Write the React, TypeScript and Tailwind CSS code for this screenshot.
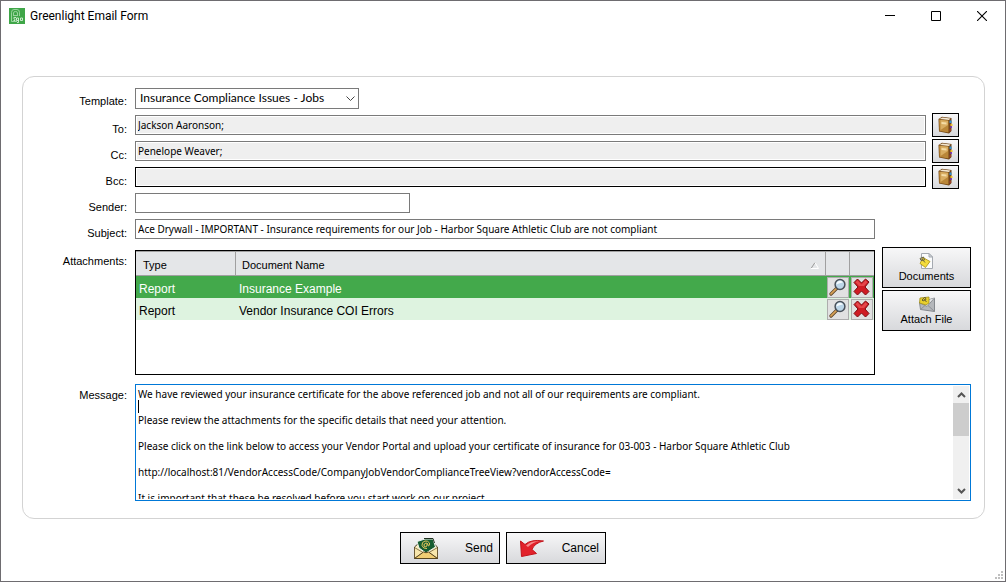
import React from 'react';

const message = `We have reviewed your insurance certificate for the above referenced job and not all of our requirements are compliant.

Please review the attachments for the specific details that need your attention.

Please click on the link below to access your Vendor Portal and upload your certificate of insurance for 03-003 - Harbor Square Athletic Club

http://localhost:81/VendorAccessCode/CompanyJobVendorComplianceTreeView?vendorAccessCode=

It is important that these be resolved before you start work on our project.`;

const recipients = [
  { id: 'to', label: 'To:', value: 'Jackson Aaronson;', border: 'border-[#7a7a7a]' },
  { id: 'cc', label: 'Cc:', value: 'Penelope Weaver;', border: 'border-[#7a7a7a]' },
  { id: 'bcc', label: 'Bcc:', value: '', border: 'border-black' },
];

const attachments = [
  { type: 'Report', name: 'Insurance Example', row: 'bg-[#43a94b] text-white' },
  { type: 'Report', name: 'Vendor Insurance COI Errors', row: 'bg-[#def3e0] text-black' },
];

const raised = 'border border-black bg-linear-to-b from-[#f7f7f8] to-[#d8d9dc]';

const AppIcon = () => (
  <svg viewBox="0 0 16 16" className="size-4" aria-hidden="true">
    <rect width="16" height="16" fill="#3fa648" />
    <path d="M2.500 13.500V4.500Q2.500 1.500 5 1.500H8Q10.500 1.500 10.500 4.500V8M4.500 7V5Q4.500 3.500 6.500 3.500Q8.500 3.500 8.500 5V7M2.500 13.500H8M4 7.500H9" fill="none" stroke="#a3d9a7" strokeWidth=".9" />
    <path d="M7 9.500Q4.500 9 4.500 10.200Q6.500 11 6 12.500H4.500M9.500 10H7.500V12.500H9.500M9.500 10V14.500H8M11.500 10H13.500V12.500H11.500Z" fill="none" stroke="#d8f1da" strokeWidth=".9" />
  </svg>
);

const BookIcon = () => (
  <svg viewBox="0 0 16 18" className="h-[18px] w-4" aria-hidden="true">
    <path d="M.5 3L4 .8L13.500 2V15L11 17.500L1 15.500Z" fill="#6f4213" />
    <path d="M1.500 3L4.500 1.500L12.500 2.500L11 4Z" fill="#f3e7d0" />
    <path d="M1 3.500L10.500 4.500V16.500L1.500 15Z" fill="#b98638" />
    <path d="M2.500 4L10 4.700V9L2.500 14Z" fill="#d8ad62" />
    <path d="M3.500 6L8.500 6.500V8.500L3.500 8Z" fill="#f4dda6" />
    <path d="M11 4.500L13 3V15L11 16.500Z" fill="#74451f" />
    <rect x="11.500" y="4.500" width="2" height="2.500" fill="#2e8fd0" />
    <rect x="12.500" y="8" width="2" height="2" fill="#f0c52a" />
    <rect x="12.500" y="10" width="1.500" height="2" fill="#7f39c9" />
    <rect x="11.500" y="13" width="1.500" height="2" fill="#a33a2a" />
  </svg>
);

const DocumentIcon = () => (
  <svg viewBox="0 0 16 16" className="size-4" aria-hidden="true">
    <path d="M2.500 .5H10L13.500 4V15.500H2.500Z" fill="#fafbfc" stroke="#a4a9b0" />
    <path d="M10 .5V4H13.500Z" fill="#d5d9de" stroke="#a4a9b0" />
    <path d="M4 4.500L11 8.500L6.500 14.500L1 10.500Z" fill="#f4dc3c" stroke="#a78d12" strokeWidth=".8" />
    <path d="M1 5.500L4.500 4L5.500 7L2 7.500ZM3 6L6 9.500" fill="none" stroke="#6b6640" />
  </svg>
);

const AttachIcon = () => (
  <svg viewBox="0 0 18 16" className="h-4 w-[18px]" aria-hidden="true">
    <path d="M1.500 6.500L16.500 2V15.500L2.500 13.500Z" fill="#b4b7bb" stroke="#85898e" />
    <path d="M2 7L9 10.500L16.500 2" fill="#e4e6e8" stroke="#8d9196" />
    <path d="M2.500 13.500L7 9.500M16.500 15.500L10 9.500" stroke="#8d9196" />
    <path d="M2 2L11 1V7L8 9L1.500 7Z" fill="#e8cf2c" stroke="#a18d1b" strokeWidth=".8" />
    <path d="M4 4L7 1L8 3.500L5 5ZM6 3L8.500 6" fill="none" stroke="#6a6230" />
  </svg>
);

const MagnifierIcon = () => (
  <svg viewBox="0 0 18 18" className="size-[18px]" aria-hidden="true">
    <path d="M2 16L8 10" stroke="#5b4226" strokeWidth="3.200" strokeLinecap="round" />
    <path d="M2 15.800L7.500 10.300" stroke="#d6a055" strokeWidth="1.800" strokeLinecap="round" />
    <circle cx="11" cy="6.500" r="4.900" fill="#bcd6e8" stroke="#49515a" strokeWidth="1.500" />
    <path d="M7.500 6.500A3.500 3.500 0 0 1 14 4.500Q10.500 5 7.500 6.500Z" fill="#f4fafd" />
  </svg>
);

const DeleteIcon = () => (
  <svg viewBox="0 0 18 18" className="size-[18px]" aria-hidden="true">
    <path d="M4.500 1L8.500 5L12.500 1L16 4L12 9L16 13.500L12.500 17L8.500 13L4.500 17L1 13.500L5 9L1 4.500Z" fill="#cf1c24" stroke="#7d0b10" strokeLinejoin="round" />
    <path d="M4.500 2.300L8.500 6.500L12.500 2.300L14.500 4.200L11 8H6L2.500 4.300Z" fill="#ee5a5c" opacity=".7" />
  </svg>
);

const SendIcon = () => (
  <svg viewBox="0 0 26 24" className="h-6 w-[26px]" aria-hidden="true">
    <path d="M1.500 11L7 6H19L24.500 11V22.500H1.500Z" fill="#fbeec0" stroke="#3f3521" />
    <path d="M4 5.500L12 3L20 3L22.500 11L13 17L6 12Z" fill="#165c31" stroke="#eef3ee" />
    <path d="M11 2.500L20 2.500L21.500 7" fill="none" stroke="#20301f" />
    <path d="M15 9Q15 7 13 7Q10.500 7.500 11 10Q12 11.500 14 10V7.500M15 10Q17 10 16.500 7Q15 4.500 12 5Q8.500 6 9 9.500Q10 13 14 12.500" fill="none" stroke="#e6c75c" strokeWidth="1" />
    <path d="M1.500 11.500L10 16.500L1.500 22.500ZM24.500 11.500L16 16.500L24.500 22.500Z" fill="#f8e6ac" stroke="#57451f" strokeWidth=".7" />
    <path d="M1.500 22.500L10.500 16Q13 17.500 15.500 16L24.500 22.500Z" fill="#f0cd74" stroke="#57451f" />
  </svg>
);

const CancelIcon = () => (
  <svg viewBox="0 0 26 20" className="h-5 w-[26px]" aria-hidden="true">
    <path d="M1.500 3L6 6.500Q12 1 24.500 3Q15.500 5 13 11.500L17.500 15.500L2.500 18.500Z" fill="#e2222b" stroke="#c3131b" strokeLinejoin="round" />
    <path d="M7 7.500Q12 2.500 21 3.300Q14 4 9 9Z" fill="#f58a8b" />
  </svg>
);

const fieldLabel = 'w-[104px] shrink-0 self-end text-right leading-[18px]';
const textField = "h-5 border px-[2px] pb-px font-['Noto_Sans',sans-serif] text-[10px]";
const headCell = 'border-y border-[#a0a0a0] pt-[3px] font-normal';
const cellButton = 'ml-px flex h-[21px] w-[22px] items-center justify-center border border-[#adadad] bg-[#e1e1e1]';

const App: React.FC = () => {
  return (
    <main className="flex min-h-screen flex-col border border-[#6e6c70] bg-white font-['Liberation_Sans',sans-serif] text-[11px] text-black">
      <header className="flex h-[30px] items-center">
        <div className="flex flex-1 items-center gap-[5px] pl-2 font-['Roboto',sans-serif] text-xs">
          <AppIcon />
          <h1>Greenlight Email Form</h1>
        </div>
        <button type="button" aria-label="Minimize" className="flex h-full w-[46px] items-center justify-center">
          <svg viewBox="0 0 10 10" className="size-[10px]"><path d="M0 4.500H10" stroke="#000" /></svg>
        </button>
        <button type="button" aria-label="Maximize" className="flex h-full w-[46px] items-center justify-center">
          <svg viewBox="0 0 10 10" className="size-[10px]"><path d="M.5 .5H9.500V9.500H.5Z" fill="none" stroke="#000" /></svg>
        </button>
        <button type="button" aria-label="Close" className="flex h-full w-[46px] items-center justify-center">
          <svg viewBox="0 0 10 10" className="size-[10px]"><path d="M0 0L10 10M10 0L0 10" stroke="#000" strokeWidth="1.100" /></svg>
        </button>
      </header>

      <form className="flex flex-1 flex-col">
        <section className="mt-[45px] mr-5 ml-[21px] rounded-xl border border-[#d3d3d3] pt-[11px] pr-[13px] pb-[17px]">
          {/* Template */}
          <div className="mb-[2px] flex h-[22px] items-start gap-2">
            <label htmlFor="template" className={fieldLabel}>Template:</label>
            <div className="relative w-56">
              <select id="template" className="block h-[21px] w-full appearance-none border border-[#7a7a7a] bg-white pb-px pl-1 font-['Lato',sans-serif] text-xs">
                <option>Insurance Compliance Issues - Jobs</option>
              </select>
              <svg viewBox="0 0 9 6" className="pointer-events-none absolute top-2 right-1 h-[6px] w-[9px]">
                <path d="M.5 .5L4.500 4.500L8.500 .5" fill="none" stroke="#444" />
              </svg>
            </div>
          </div>

          {/* Recipients */}
          {recipients.map((field) => (
            <div key={field.id} className="flex h-[26px] items-center gap-2 pr-3">
              <label htmlFor={field.id} className={fieldLabel}>{field.label}</label>
              <div className="flex flex-1 items-center gap-[6px]">
                <input id={field.id} readOnly defaultValue={field.value} className={`min-w-0 flex-1 bg-[#efefef] shadow-[inset_0_0_0_1px_#fff] ${textField} ${field.border}`} />
                <button type="button" aria-label={`Address book ${field.label}`} className={`flex h-6 w-[27px] items-center justify-center ${raised}`}>
                  <BookIcon />
                </button>
              </div>
            </div>
          ))}

          <div className="flex h-[26px] items-center gap-2">
            <label htmlFor="sender" className={fieldLabel}>Sender:</label>
            <input id="sender" className={`w-[275px] border-[#7a7a7a] ${textField}`} />
          </div>
          <div className="flex h-[26px] items-center gap-2 pr-24">
            <label htmlFor="subject" className={fieldLabel}>Subject:</label>
            <input id="subject" defaultValue="Ace Drywall - IMPORTANT - Insurance requirements for our Job - Harbor Square Athletic Club are not compliant" className={`min-w-0 flex-1 border-[#7a7a7a] ${textField}`} />
          </div>

          {/* Attachments */}
          <div className="mt-[5px] flex gap-2">
            <span id="attachments" className="w-[104px] shrink-0 pt-[5px] text-right leading-[18px]">Attachments:</span>
            <div className="flex flex-1 gap-[7px]">
              <div className="mt-[3px] h-[125px] flex-1 border border-black">
                <table aria-labelledby="attachments" className="w-full table-fixed border-separate border-spacing-0 text-left text-xs">
                  <colgroup>
                    <col className="w-[100px]" />
                    <col />
                    <col className="w-6" />
                    <col className="w-6" />
                  </colgroup>
                  <thead>
                    <tr className="h-[25px] bg-[#e4e6e8] text-[11px]">
                      <th className={`border-r pl-[7px] ${headCell}`}>Type</th>
                      <th className={`border-r px-[6px] ${headCell}`}>
                        <div className="flex items-center justify-between">
                          Document Name
                          <svg viewBox="0 0 8 7" className="h-[7px] w-2"><path d="M0 6.500L4 .5" stroke="#999" /><path d="M4 .5L7.500 6.500H0" fill="none" stroke="#fff" /></svg>
                        </div>
                      </th>
                      <th className={`border-r ${headCell}`} aria-label="View" />
                      <th className={headCell} aria-label="Delete" />
                    </tr>
                  </thead>
                  <tbody>
                    {attachments.map((file) => (
                      <tr key={file.name} className={`h-[22px] ${file.row}`}>
                        <td className="p-0 pt-1 pl-[3px]">{file.type}</td>
                        <td className="p-0 pt-1 pl-[3px]">{file.name}</td>
                        <td className="p-0">
                          <button type="button" aria-label={`View ${file.name}`} className={cellButton}>
                            <MagnifierIcon />
                          </button>
                        </td>
                        <td className="p-0">
                          <button type="button" aria-label={`Delete ${file.name}`} className={cellButton}>
                            <DeleteIcon />
                          </button>
                        </td>
                      </tr>
                    ))}
                  </tbody>
                </table>
              </div>
              <div className="flex w-[89px] flex-col gap-[2px]">
                <button type="button" className={`flex h-[41px] flex-col items-center justify-center ${raised}`}>
                  <DocumentIcon />
                  <span className="leading-[14px]">Documents</span>
                </button>
                <button type="button" className={`flex h-[41px] flex-col items-center justify-center ${raised}`}>
                  <AttachIcon />
                  <span className="leading-[14px]">Attach File</span>
                </button>
              </div>
            </div>
          </div>

          {/* Message */}
          <div className="mt-[9px] flex gap-2">
            <label htmlFor="message" className="w-[104px] shrink-0 pt-[2px] text-right leading-[18px]">Message:</label>
            <div className="relative flex h-[117px] flex-1 border border-[#0078d7] p-px">
              <textarea id="message" defaultValue={message} className="h-full min-w-0 flex-1 resize-none overflow-hidden pt-[2px] pl-px font-['Noto_Sans',sans-serif] text-[10px] leading-[13px] outline-none" />
              <span className="absolute top-[15px] left-[2px] h-[13px] w-px bg-black" />
              <div className="flex w-4 flex-col items-center bg-[#f0f0f0]" aria-hidden="true">
                <svg viewBox="0 0 9 17" className="h-[17px] w-[9px]"><path d="M1 11L4.500 7.500L8 11" fill="none" stroke="#555" strokeWidth="2" /></svg>
                <div className="h-[33px] w-full bg-[#cdcdcd]" />
                <svg viewBox="0 0 9 17" className="mt-auto h-[17px] w-[9px]"><path d="M1 7L4.500 10.500L8 7" fill="none" stroke="#555" strokeWidth="2" /></svg>
              </div>
            </div>
          </div>
        </section>

        <div className="mt-[13px] flex justify-center gap-[6px] text-xs">
          <button type="submit" className={`flex h-8 w-[100px] items-center justify-between pr-[6px] pl-3 ${raised}`}>
            <SendIcon />
            Send
          </button>
          <button type="button" className={`flex h-8 w-[100px] items-center justify-between pr-[6px] pl-3 ${raised}`}>
            <CancelIcon />
            Cancel
          </button>
        </div>

        <div className="mt-auto flex justify-end pr-[2px] pb-[2px]">
          <svg viewBox="0 0 8 8" className="size-2" fill="#bfbfbf" aria-hidden="true">
            <path d="M6 0h2v2H6ZM3 3h2v2H3ZM6 3h2v2H6ZM0 6h2v2H0ZM3 6h2v2H3ZM6 6h2v2H6Z" />
          </svg>
        </div>
      </form>
    </main>
  );
};

export default App;
